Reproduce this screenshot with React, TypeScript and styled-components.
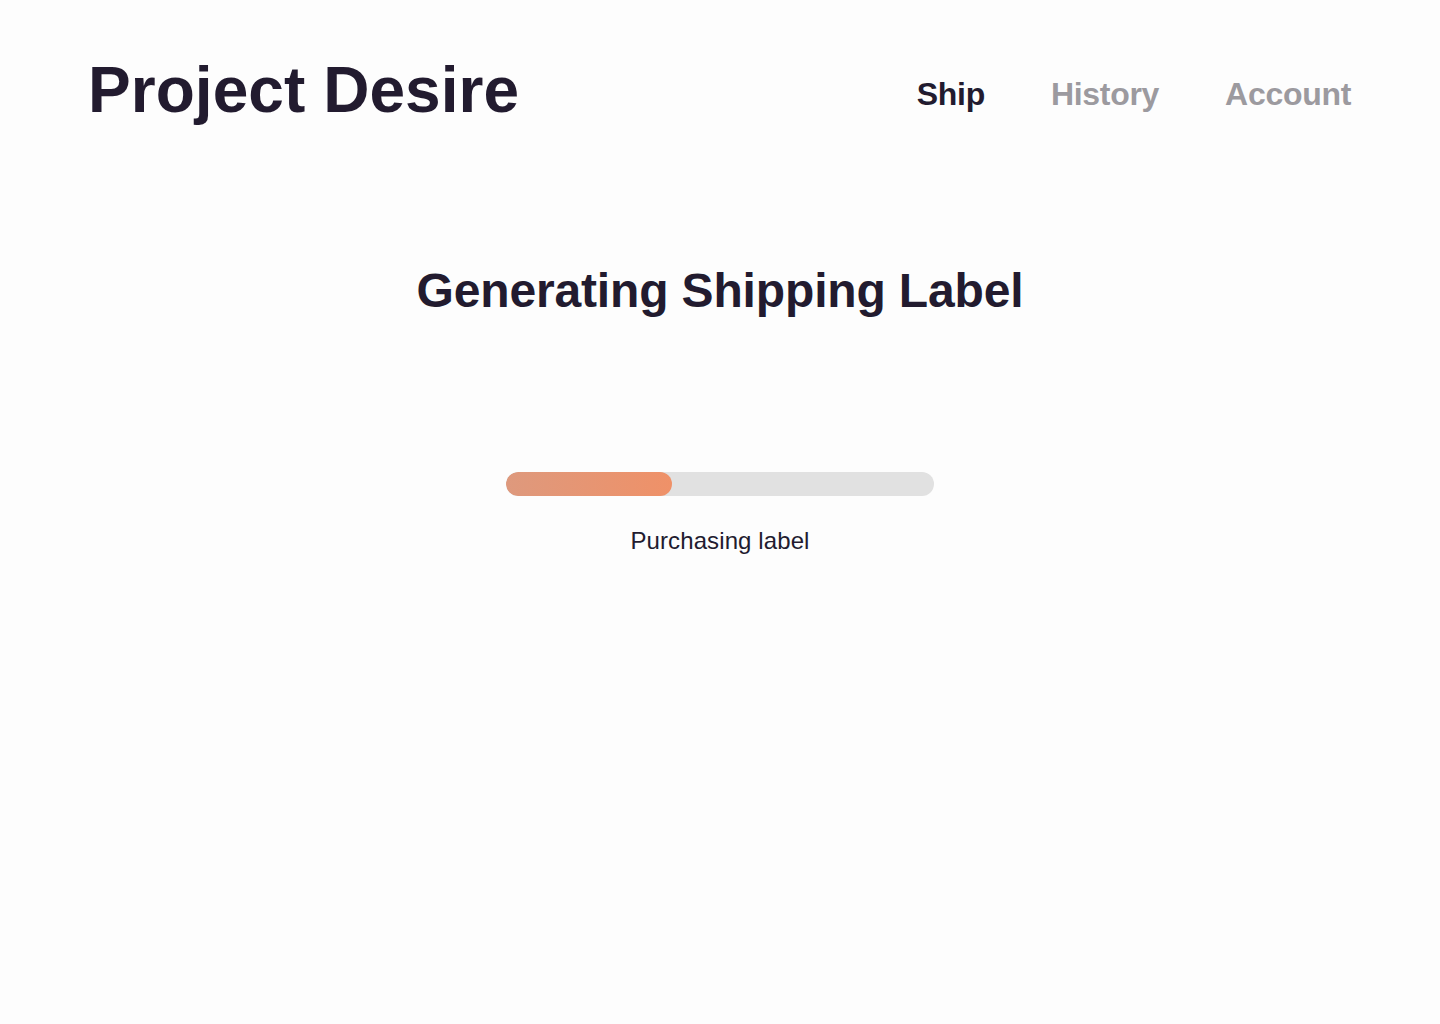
import styled, { createGlobalStyle } from 'styled-components';

const GlobalStyle = createGlobalStyle`
  html, body {
    margin: 0;
    padding: 0;
    background: #fdfdfd;
  }
  body {
    font-family: "Liberation Sans", Arial, sans-serif;
    color: #221b2f;
  }
`;

const Page = styled.div`
  min-height: 1024px;
  display: flex;
  flex-direction: column;
`;

const Header = styled.header`
  display: flex;
  align-items: center;
  justify-content: space-between;
  padding: 53px 89px 0 88px;
`;

const Logo = styled.h1`
  margin: 0;
  font-size: 64px;
  font-weight: 700;
  line-height: 74px;
  letter-spacing: 0.05px;
`;

const Nav = styled.nav`
  display: flex;
  gap: 66px;
  padding-top: 8px;
`;

const NavLink = styled.a<{ $active?: boolean }>`
  font-size: 32px;
  font-weight: 700;
  line-height: 40px;
  letter-spacing: -0.3px;
  color: ${({ $active }) => ($active ? '#221b2f' : '#9c9a9f')};
  text-decoration: none;
  cursor: pointer;
`;

const Main = styled.main`
  display: flex;
  flex-direction: column;
  align-items: center;
  padding-top: 136px;
`;

const Heading = styled.h2`
  margin: 0;
  font-size: 48px;
  font-weight: 700;
  line-height: 56px;
  letter-spacing: -0.15px;
`;

const Track = styled.div`
  margin-top: 153px;
  width: 428px;
  height: 24px;
  border-radius: 12px;
  background: #e1e1e1;
  overflow: hidden;
`;

const Fill = styled.div`
  height: 100%;
  border-radius: 12px;
  background: linear-gradient(90deg, #de997d 0%, #ef9168 100%);
`;

const Status = styled.p`
  margin: 31px 0 0;
  font-size: 24px;
  line-height: 28px;
  letter-spacing: 0.1px;
  color: #221b2f;
`;

const App = () => {
  const progress = 0.388;

  return (
    <>
      <GlobalStyle />
      <Page>
        <Header>
          <Logo>Project Desire</Logo>
          <Nav>
            <NavLink $active>Ship</NavLink>
            <NavLink>History</NavLink>
            <NavLink>Account</NavLink>
          </Nav>
        </Header>
        <Main>
          <Heading>Generating Shipping Label</Heading>
          <Track>
            <Fill style={{ width: `${progress * 100}%` }} />
          </Track>
          <Status>Purchasing label</Status>
        </Main>
      </Page>
    </>
  );
};

export default App;
